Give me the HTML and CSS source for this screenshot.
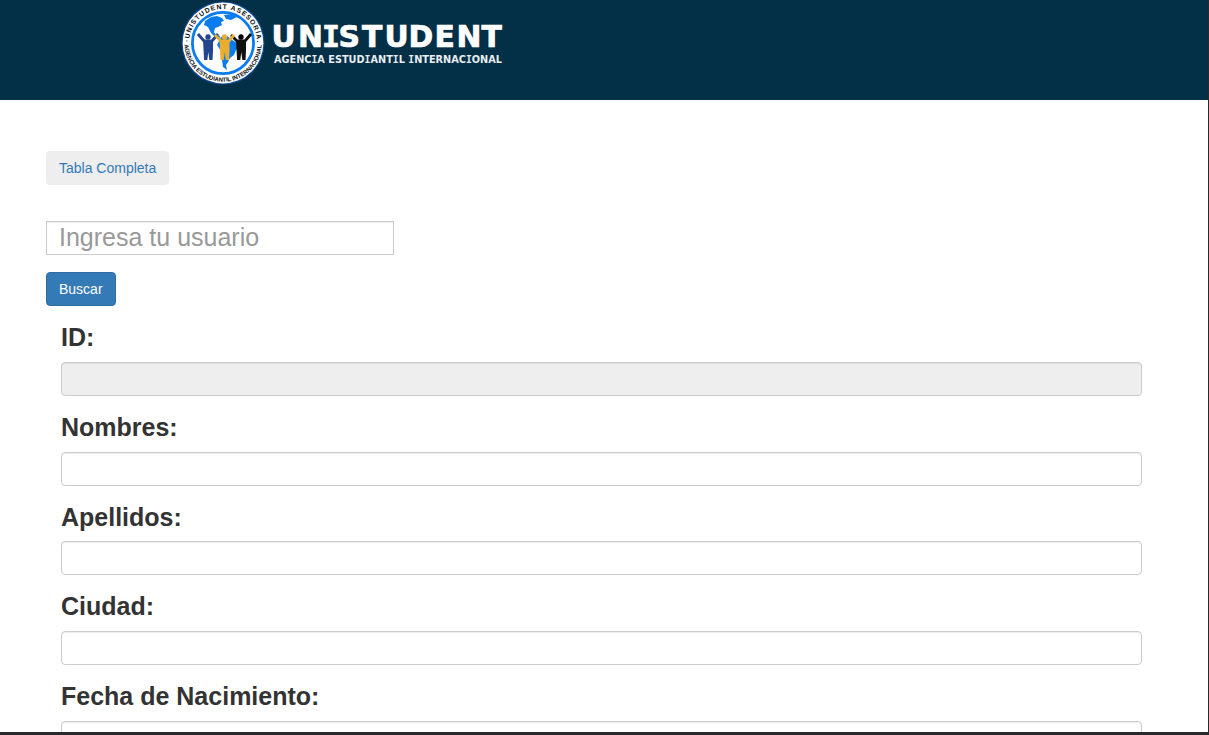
FILE: index.html
```html
<!DOCTYPE html>
<html lang="es">
<head>
<meta charset="utf-8">
<title>Unistudent</title>
<link rel="stylesheet" href="styles.css">
</head>
<body>
<div class="page">
  <header class="header">
    <svg class="seal" width="84" height="84" viewBox="0 0 84 84" role="img" aria-label="Unistudent">
      <defs>
        <path id="arc-top" d="M8 42A34 34 0 0 1 76 42"/>
        <path id="arc-bottom" d="M3.300 42A38.700 38.700 0 0 0 80.700 42"/>
      </defs>
      <circle cx="42" cy="42" r="41.6" fill="#0b4a96"/>
      <circle cx="42" cy="42" r="40.4" fill="#fff"/>
      <circle cx="42" cy="42" r="30.6" fill="#fff" stroke="#0a7cf0" stroke-width="2.8"/>
      <path fill="#0a7cf0" d="M24 20l6-4 6-1 5 2 2 3-3 1 1 3-4 2-3 1-1 4 2 3 4 1 0 2-5-1-4-4-3-6-4-2zM43 14l8-1 5 3-6 3-5-1z"/>
      <path fill="#0a7cf0" d="M40 36l6-1 5 4 5 3 2 4-3 3-2 5-4 3-2 4-2 3 1 5-4-3-1-7-1-9-4-6z"/>
      <g class="arms">
        <path stroke="#23458f" d="M17 33l6 7h8l6-7"/>
        <path stroke="#101010" d="M50 34l6 6h8l6-7"/>
        <path stroke="#e9ae2d" d="M34 34l6 6h8l5-6"/>
      </g>
      <path fill="#23458f" d="M22 39h10v11l-.5 9h-3.2l-1-8-1 8h-3.2z"/>
      <path fill="#101010" d="M55 39h10v11l-.5 9h-3.2l-1-8-1 8h-3.2z"/>
      <path fill="#e9ae2d" d="M38.500 39h10v11l-.5 9h-3.200l-1-8-1 8h-3.200z"/>
      <circle cx="27" cy="36" r="2.7" fill="#23458f"/>
      <circle cx="43.500" cy="36" r="2.700" fill="#e9ae2d"/>
      <circle cx="60" cy="36" r="2.700"/>
      <text class="seal-text"><textPath href="#arc-top" startOffset="1" textLength="105">·UNISTUDENT ASESORÍA.</textPath></text>
      <text class="seal-text seal-small"><textPath href="#arc-bottom" startOffset="1.5" textLength="118">AGENCIA ESTUDIANTIL INTERNACIONAL</textPath></text>
    </svg>
    <svg class="wordmark" width="236" height="50" viewBox="0 0 236 50">
      <text class="brand" y="26.500" x="1.500 28 52 68.500 92 114.500 138.500 164.500 186.500 211.500">UN<tspan class="slab">I</tspan>STUDENT</text>
      <text class="tagline" x="4" y="43" textLength="228" lengthAdjust="spacingAndGlyphs">AGENC<tspan class="slab">I</tspan>A ESTUD<tspan class="slab">I</tspan>ANT<tspan class="slab">I</tspan>L <tspan class="slab">I</tspan>NTERNAC<tspan class="slab">I</tspan>ONAL</text>
    </svg>
  </header>
  <main class="content">
    <a class="btn btn-light">Tabla Completa</a>
    <input class="search" type="text" placeholder="Ingresa tu usuario">
    <button class="btn btn-primary" type="button">Buscar</button>
    <form class="form">
      <div class="group"><label for="id">ID:</label><input id="id" class="field" disabled></div>
      <div class="group"><label for="nombres">Nombres:</label><input id="nombres" class="field"></div>
      <div class="group"><label for="apellidos">Apellidos:</label><input id="apellidos" class="field"></div>
      <div class="group"><label for="ciudad">Ciudad:</label><input id="ciudad" class="field"></div>
      <div class="group"><label for="fecha">Fecha de Nacimiento:</label><input id="fecha" class="field"></div>
    </form>
  </main>
</div>
</body>
</html>
```
FILE: styles.css
```css
* { box-sizing: border-box; }
body { margin: 0; font: 14px/1.42857 "Liberation Sans", Arial, sans-serif; color: #333; background: #fff; }
.page { height: 735px; overflow: hidden; border-right: 1px solid #29292c; border-bottom: 3px solid #29292c; }
.header { display: flex; align-items: flex-start; height: 100px; padding: 1px 0 0 181px; background: #033047; }
.wordmark { margin: 19px 0 0 5px; overflow: visible; }
.arms { fill: none; stroke-width: 2.8; }
.seal-text { font: bold 6.8px "Liberation Sans", sans-serif; fill: #111; }
.seal-small { font-size: 6px; }
.brand { font: bold 29.8px "DejaVu Sans", sans-serif; fill: #fff; stroke: #fff; stroke-width: .7; }
.tagline { font: bold 10px "DejaVu Sans", sans-serif; fill: #e9eef1; }
.slab { font-family: "DejaVu Sans Mono", monospace; }
.content { display: flex; flex-direction: column; align-items: flex-start; padding: 51px 51px 0 46px; }
.btn { height: 34px; padding: 6px 12px; border: 1px solid transparent; border-radius: 4px; font: 14px/20px "Liberation Sans", Arial, sans-serif; }
.btn-light { background: #eee; color: #337ab7; }
.btn-primary { margin-top: 17px; background: #337ab7; border-color: #2e6da4; color: #fff; }
.search, .field { height: 34px; padding: 6px 12px; border: 1px solid #ccc; background: #fff; color: #555; box-shadow: inset 0 1px 1px rgba(0, 0, 0, .075); }
.search { width: 348px; margin-top: 36px; font: 25px "Liberation Sans", Arial, sans-serif; padding: 0 12px 2px; }
.search::placeholder { color: #999; opacity: 1; }
.form { align-self: stretch; padding: 15.2px 15px 0; }
.group { display: flow-root; padding-bottom: 15px; }
.group label { display: block; margin: -1px 0 6px; font-size: 25px; font-weight: bold; }
.field { display: block; width: 100%; border-radius: 4px; }
.field:disabled { background: #eee; }
```
